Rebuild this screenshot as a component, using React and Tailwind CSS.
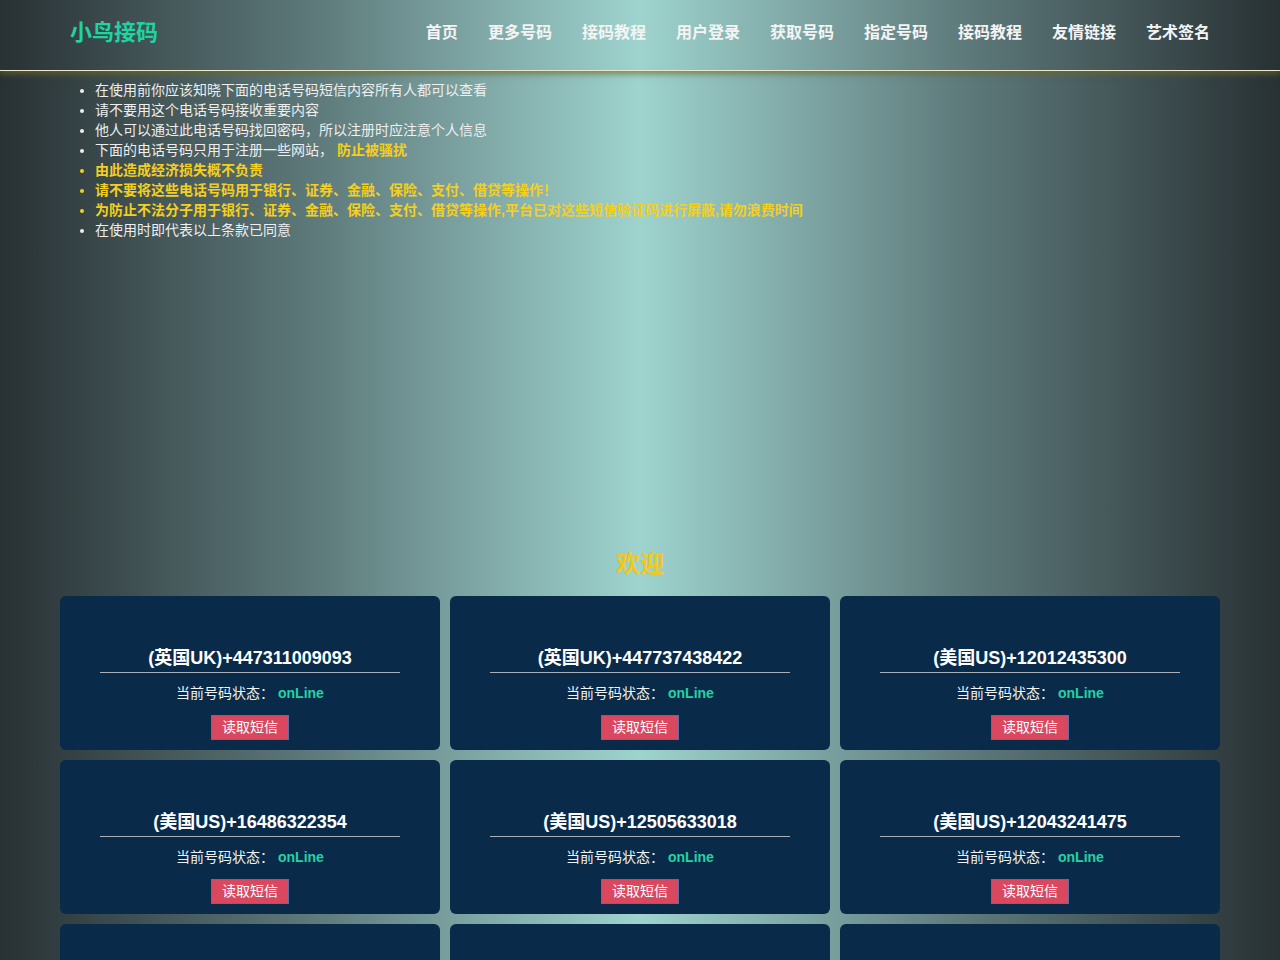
import React from "react";

const nav = ["首页", "更多号码", "接码教程", "用户登录", "获取号码", "指定号码", "接码教程", "友情链接", "艺术签名"];

const cards = [
  "(英国UK)+447311009093",
  "(英国UK)+447737438422",
  "(美国US)+12012435300",
  "(美国US)+16486322354",
  "(美国US)+12505633018",
  "(美国US)+12043241475",
];

function Card({ title }) {
  return (
    <div className="bg-[#0a2a4a] rounded-[6px] h-[154px] flex flex-col items-center pt-[51px]">
      <div className="w-[300px] text-center border-b border-[#a9b0b8] pb-[3px] text-[18px] leading-[22px] font-bold text-white">
        {title}
      </div>
      <div className="mt-[10px] text-[14px] leading-[20px] text-[#f2f2f2]">
        当前号码状态： <span className="font-bold text-[#22d3a4]">onLine</span>
      </div>
      <div className="mt-[12px] h-[25px] w-[78px] flex items-center justify-center bg-[#d9485f] border border-[#5d6ea3] text-[14px] text-white">
        读取短信
      </div>
    </div>
  );
}

export default function App() {
  const font = { fontFamily: '"Liberation Sans", "Noto Sans CJK SC", sans-serif' };
  return (
    <div
      style={font}
      className="h-[960px] overflow-hidden bg-[linear-gradient(to_right,#283134_0%,#5f7b7c_25%,#9ed3ce_50%,#5f7b7c_75%,#283134_100%)]"
    >
      <header className="h-[71px] border-b border-[#ece8cc] shadow-[0_3px_6px_rgba(110,105,40,0.7)]">
        <div className="w-[1160px] mx-auto px-[10px] h-[70px] pb-[5px] flex items-center justify-between">
          <div className="text-[22px] font-bold text-[#1fd3a2]">小鸟接码</div>
          <nav className="flex gap-[30px] text-[16px] font-bold text-[#f4f4f4]">
            {nav.map((n, i) => (
              <span key={i}>{n}</span>
            ))}
          </nav>
        </div>
      </header>

      <div className="w-[1160px] mx-auto">
        <ul className="list-disc pl-[35px] mt-[9px] text-[14px] leading-[20px] text-[#eeeeee]">
          <li>在使用前你应该知晓下面的电话号码短信内容所有人都可以查看</li>
          <li>请不要用这个电话号码接收重要内容</li>
          <li>他人可以通过此电话号码找回密码，所以注册时应注意个人信息</li>
          <li>
            下面的电话号码只用于注册一些网站，{" "}
            <span className="font-bold text-[#f5cf1d]">防止被骚扰</span>
          </li>
          <li className="font-bold text-[#f5cf1d]">由此造成经济损失概不负责</li>
          <li className="font-bold text-[#f5cf1d]">请不要将这些电话号码用于银行、证券、金融、保险、支付、借贷等操作！</li>
          <li className="font-bold text-[#f5cf1d]">
            为防止不法分子用于银行、证券、金融、保险、支付、借贷等操作,平台已对这些短信验证码进行屏蔽,请勿浪费时间
          </li>
          <li>在使用时即代表以上条款已同意</li>
        </ul>

        <div className="mt-[309px] text-center text-[24px] leading-[30px] font-bold text-[#f3c81a]">欢迎</div>

        <div className="mt-[17px] grid grid-cols-3 gap-[10px]">
          {cards.map((c, i) => (
            <Card key={i} title={c} />
          ))}
          <div className="bg-[#0a2a4a] rounded-[6px] h-[154px]" />
          <div className="bg-[#0a2a4a] rounded-[6px] h-[154px]" />
          <div className="bg-[#0a2a4a] rounded-[6px] h-[154px]" />
        </div>
      </div>
    </div>
  );
}
